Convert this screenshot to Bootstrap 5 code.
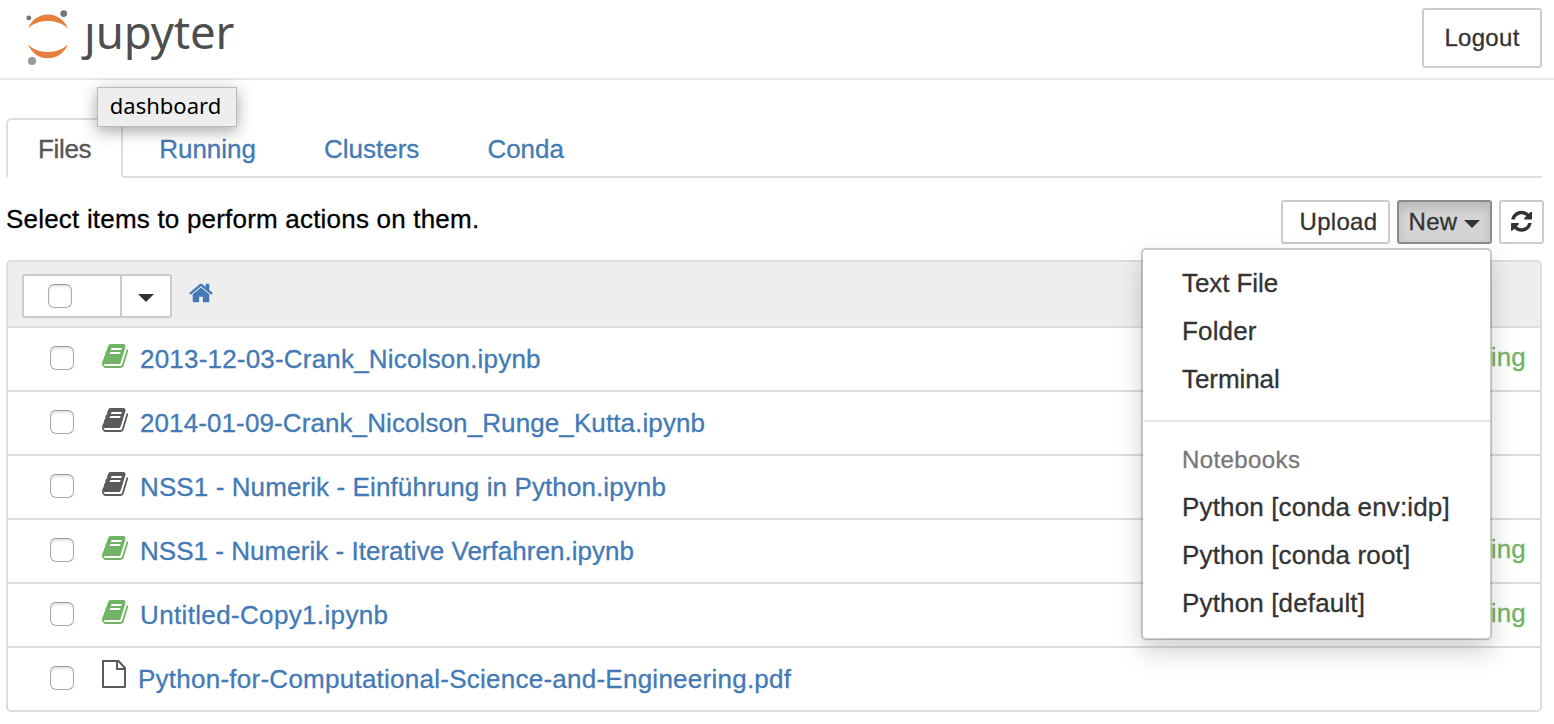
<!DOCTYPE html>
<html lang="en">
<head>
<meta charset="utf-8">
<title>Home</title>
<link rel="stylesheet" href="https://cdn.jsdelivr.net/npm/bootstrap@5.3.0/dist/css/bootstrap.min.css">
<style>
body{font-family:"Liberation Sans",Arial,sans-serif;font-size:26px;line-height:36px;color:#000;background:#fff;overflow:hidden;letter-spacing:.2px;-webkit-text-stroke:.3px currentColor}
a{color:#437ab5;text-decoration:none}
.topbar{height:80px;border-bottom:2px solid #e7e7e7;padding:8px 12px 10px 26px}
.brand{width:210px;height:60px}
.wordmark{font-family:"Noto Sans",sans-serif;font-size:45.5px;line-height:60px;color:#4e4e4e;letter-spacing:-.1px;margin-left:15px;margin-top:-7px;-webkit-text-stroke:0}
.wordmark .tail{display:inline-block;clip-path:inset(20px -5px -10px -12px)}
.btn{--bs-btn-font-size:24px;--bs-btn-line-height:36px;--bs-btn-color:#333;--bs-btn-bg:#fff;--bs-btn-border-color:#ccc;--bs-btn-border-width:2px;--bs-btn-border-radius:3px;--bs-btn-padding-x:0;--bs-btn-padding-y:0;letter-spacing:.3px}
.btn-logout{width:120px;height:60px}
.title-tip{left:97px;top:87px;width:140px;height:40px;background:#eee;border:1px solid #bababa;font-family:"Noto Sans",sans-serif;font-size:22px;line-height:35px;letter-spacing:0;padding-right:3px;box-shadow:0 4px 16px rgba(0,0,0,.36);z-index:20;-webkit-text-stroke:0}
.main-area{padding:38px 12px 0 6px}
.nav-tabs{--bs-nav-tabs-border-width:2px;--bs-nav-tabs-border-color:#ddd;--bs-nav-tabs-link-active-border-color:#ddd #ddd #fff;--bs-nav-tabs-link-active-color:#555;--bs-nav-link-color:#437ab5;--bs-nav-link-padding-x:30px;--bs-nav-link-padding-y:0;--bs-nav-tabs-border-radius:6px;height:60px}
.nav-tabs .nav-link{height:60px;line-height:58px;letter-spacing:0}
.nav-tabs .nav-link.active{letter-spacing:-.35px}
.nav-tabs .nav-item{margin-right:4px}
.toolbar{height:82px;padding-top:22px}
.toolbar .tools{gap:7px;margin-right:-2px}
.toolbar .btn{height:44px;display:flex;align-items:center;justify-content:center}
.btn-up{width:109px;padding-left:6px!important}
.btn-new{width:95px;--bs-btn-bg:#d4d4d4;--bs-btn-border-color:#8c8c8c;box-shadow:inset 0 6px 10px rgba(0,0,0,.125)}
.btn-new .down{margin-left:7px}
.btn-ref{width:45px}
.btn-ref svg{margin-bottom:2px}
.hint{padding-top:1px}
.down{border:8px solid transparent;border-top-color:#333;border-bottom:0;width:0;height:0}
.dropdown-menu{--bs-dropdown-font-size:26px;--bs-dropdown-min-width:351px;--bs-dropdown-border-width:2px;--bs-dropdown-border-color:rgba(0,0,0,.2);--bs-dropdown-border-radius:5px;--bs-dropdown-padding-y:9px;--bs-dropdown-item-padding-x:39px;--bs-dropdown-item-padding-y:6px;--bs-dropdown-link-color:#333;--bs-dropdown-header-color:#777;--bs-dropdown-header-padding-x:39px;--bs-dropdown-divider-bg:#e5e5e5;top:48px;right:0;height:392px;box-shadow:0 12px 24px rgba(0,0,0,.175);background-clip:padding-box}
.dropdown-item{letter-spacing:.15px}
.dropdown-item.snug{letter-spacing:-.08px}
.dropdown-divider{border-top-width:2px;margin:17px 0 18px;opacity:1}
.dropdown-header{font-size:24px;line-height:39px;height:43px;padding-top:0;padding-bottom:0;letter-spacing:.4px}
.files{border:2px solid #ddd;border-radius:5px;height:452px}
.files-head{height:66px;background:#eee;border-bottom:2px solid #ddd;padding:12px 14px}
.file-row{height:64px;border-bottom:2px solid #ddd;padding:0 14px 0 42px}
.file-row:last-child{border-bottom:0;height:62px}
.form-check-input{width:24px;height:24px;margin:0;border:1.5px solid #aaa;border-top-color:#969696;border-radius:6px!important;box-shadow:inset 0 2px 2px rgba(0,0,0,.1)}
.file-row .form-check-input{margin-bottom:2px}
.selector{width:150px;height:44px;background:#fff;border:2px solid #ccc;border-radius:3px}
.selector .tick{width:98px;border-right:2px solid #ccc;padding:8px 0 0 24px}
.glyph{width:26px;height:28px;margin:0 12px 6px 28px;fill:currentColor;flex:none;overflow:visible}
.glyph-file{width:24px;margin:0 12px 10px 28px}
.live{color:#72b465}
.files .state{padding-bottom:4px}
.idle{color:#5b5b5b}
.files .fname{line-height:62px}
.home-icon{margin:6px 0 0 17px}
.fit-1{letter-spacing:.1px}
.fit-2{letter-spacing:.03px}
.fit-3{letter-spacing:.35px}
.fit-4{letter-spacing:.25px}
</style>
</head>
<body>
<header class="topbar d-flex justify-content-between">
  <a href="#" class="brand d-flex">
    <svg width="43" height="56" viewBox="0 0 43 56" class="flex-shrink-0 overflow-visible">
      <path d="M2 20.500C6 11 14 6.600 21.800 6.600S38 11 42 20.500C37 15.500 29.500 12.900 21.800 12.900S6.500 15.500 2 20.500ZM2 36.300C6 46 14 50.300 21.800 50.300S38 46 42 36.300C37 41.500 29.500 44 21.800 44S6.500 41.500 2 36.300Z" fill="#e67e3c"/>
      <circle cx="2.800" cy="9.900" r="2.400" fill="#767676"/><circle cx="37.700" cy="5.600" r="3.400" fill="#767676"/><circle cx="6" cy="53" r="4.100" fill="#989898"/>
    </svg>
    <span class="wordmark"><span class="tail">j</span>upyter</span>
  </a>
  <button class="btn btn-logout">Logout</button>
</header>
<div class="title-tip position-absolute text-center">dashboard</div>
<main class="main-area">
  <ul class="nav nav-tabs">
    <li class="nav-item"><a class="nav-link active" href="#">Files</a></li>
    <li class="nav-item"><a class="nav-link" href="#">Running</a></li>
    <li class="nav-item"><a class="nav-link" href="#">Clusters</a></li>
    <li class="nav-item"><a class="nav-link" href="#">Conda</a></li>
  </ul>
  <div class="toolbar d-flex justify-content-between">
    <div class="hint">Select items to perform actions on them.</div>
    <div class="tools d-flex">
      <button class="btn btn-up">Upload</button>
      <div class="position-relative">
        <button class="btn btn-new">New<span class="down mt-1"></span></button>
        <ul class="dropdown-menu show">
          <li><a class="dropdown-item snug" href="#">Text File</a></li>
          <li><a class="dropdown-item" href="#">Folder</a></li>
          <li><a class="dropdown-item snug" href="#">Terminal</a></li>
          <li><hr class="dropdown-divider"></li>
          <li><h6 class="dropdown-header mb-0">Notebooks</h6></li>
          <li><a class="dropdown-item" href="#">Python [conda env:idp]</a></li>
          <li><a class="dropdown-item" href="#">Python [conda root]</a></li>
          <li><a class="dropdown-item" href="#">Python [default]</a></li>
        </ul>
      </div>
      <button class="btn btn-ref" aria-label="Refresh"><svg width="21" height="24.500" viewBox="0 0 1536 1792" fill="#333"><path d="M1511 1056q0 5-1 7-64 268-268 434.500t-478 166.500q-146 0-282.500-55t-243.500-157l-129 129q-19 19-45 19t-45-19-19-45v-448q0-26 19-45t45-19h448q26 0 45 19t19 45-19 45l-137 137q71 66 161 102t187 36q134 0 250-65t186-179q11-17 53-117 8-23 30-23h192q13 0 22.500 9.500t9.500 22.500zm25-800v448q0 26-19 45t-45 19h-448q-26 0-45-19t-19-45 19-45l138-138q-148-137-349-137-134 0-250 65t-186 179q-11 17-53 117-8 23-30 23h-199q-13 0-22.500-9.500t-9.500-22.500v-7q65-268 270-434.500t480-166.500q146 0 284 55.500t245 156.500l130-129q19-19 45-19t45 19 19 45z"/></svg></button>
    </div>
  </div>
  <svg class="d-none">
    <symbol id="book" viewBox="0 0 1664 1792"><path d="M1639 478q40 57 18 129l-275 906q-19 64-76.500 107.500t-122.500 43.500h-923q-77 0-148.500-53.500t-99.500-131.500q-24-67-2-127 0-4 3-27t4-37q1-8-3-21.500t-3-19.500q2-11 8-21t16.500-23.500 16.500-23.500q23-38 45-91.500t30-91.500q3-10 .5-30t-.5-28q3-11 17-28t17-23q21-36 42-92t25-90q1-9-2.500-32t.5-28q4-13 22-30.500t22-22.500q19-26 42.500-84.500t27.500-96.500q1-8-3-25.500t-2-26.500q2-8 9-18t18-23 17-21q8-12 16.500-30.500t15-35 16-36 19.500-32 26.500-23.500 36-11.500 47.500 5.500l-1 3q38-9 51-9h761q74 0 114 56t18 130l-274 906q-36 119-71.500 153.500t-128.500 34.500h-869q-27 0-38 15-11 16-1 43 24 70 144 70h923q29 0 56-15.500t35-41.500l300-987q7-22 5-57 38 15 59 43zm-1064 2q-4 13 2 22.500t20 9.500h608q13 0 25.500-9.500t16.500-22.500l21-64q4-13-2-22.500t-20-9.500h-608q-13 0-25.500 9.500t-16.500 22.500zm-83 256q-4 13 2 22.500t20 9.500h608q13 0 25.500-9.500t16.500-22.500l21-64q4-13-2-22.500t-20-9.500h-608q-13 0-25.500 9.500t-16.500 22.500z"/></symbol>
  </svg>
  <section class="files">
    <div class="files-head d-flex">
      <div class="selector d-flex">
        <div class="tick"><input type="checkbox" class="form-check-input d-block" aria-label="Select all"></div>
        <div class="d-flex flex-fill align-items-center justify-content-center"><span class="down mt-1"></span></div>
      </div>
      <a href="#" aria-label="Home"><svg class="d-block home-icon" width="24" height="26" viewBox="0 0 1664 1792" fill="currentColor"><path d="M1408 992v480q0 26-19 45t-45 19h-384v-384h-256v384h-384q-26 0-45-19t-19-45v-480q0-1 .5-3t.5-3l575-474 575 474q1 2 1 6zm223-69l-62 74q-8 9-21 11h-3q-13 0-21-7l-692-577-692 577q-12 8-24 7-13-2-21-11l-62-74q-8-10-7-23.500t11-21.500l719-599q32-26 76-26t76 26l244 204v-195q0-14 9-23t23-9h192q14 0 23 9t9 23v408l219 182q10 8 11 21.500t-7 23.500z"/></svg></a>
    </div>
    <div class="file-row d-flex align-items-center"><input type="checkbox" class="form-check-input" aria-label="Select"><svg class="glyph live"><use href="#book"/></svg><a class="fname" href="#">2013-12-03-Crank_Nicolson.ipynb</a><span class="live state ms-auto">Running</span></div>
    <div class="file-row d-flex align-items-center"><input type="checkbox" class="form-check-input" aria-label="Select"><svg class="glyph idle"><use href="#book"/></svg><a class="fname fit-1" href="#">2014-01-09-Crank_Nicolson_Runge_Kutta.ipynb</a></div>
    <div class="file-row d-flex align-items-center"><input type="checkbox" class="form-check-input" aria-label="Select"><svg class="glyph idle"><use href="#book"/></svg><a class="fname fit-1" href="#">NSS1 - Numerik - Einführung in Python.ipynb</a></div>
    <div class="file-row d-flex align-items-center"><input type="checkbox" class="form-check-input" aria-label="Select"><svg class="glyph live"><use href="#book"/></svg><a class="fname fit-2" href="#">NSS1 - Numerik - Iterative Verfahren.ipynb</a><span class="live state ms-auto">Running</span></div>
    <div class="file-row d-flex align-items-center"><input type="checkbox" class="form-check-input" aria-label="Select"><svg class="glyph live"><use href="#book"/></svg><a class="fname fit-3" href="#">Untitled-Copy1.ipynb</a><span class="live state ms-auto">Running</span></div>
    <div class="file-row d-flex align-items-center"><input type="checkbox" class="form-check-input" aria-label="Select"><svg class="glyph glyph-file idle" viewBox="0 0 24 28"><path d="M1 1H16.500L23 8V27H1ZM15 1V9H23" fill="none" stroke="currentColor" stroke-width="2" stroke-linejoin="round"/></svg><a class="fname fit-4" href="#">Python-for-Computational-Science-and-Engineering.pdf</a></div>
  </section>
</main>
<script src="https://cdn.jsdelivr.net/npm/bootstrap@5.3.0/dist/js/bootstrap.bundle.min.js"></script>
</body>
</html>
